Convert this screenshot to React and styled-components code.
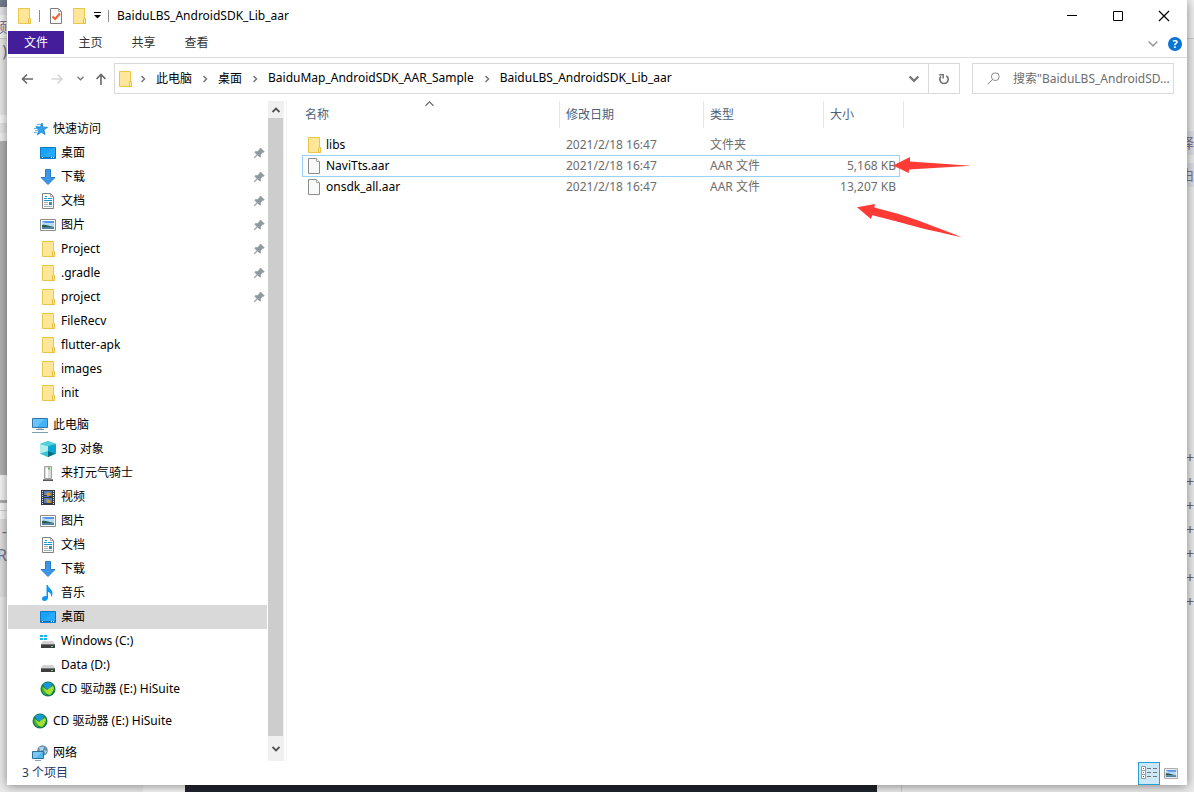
import React, { useState } from 'react';
import styled, { createGlobalStyle, css } from 'styled-components';

const GlobalStyle = createGlobalStyle`
  * { box-sizing: border-box; }
  body {
    margin: 0;
    background: #e9e9e9;
    font-family: "Noto Sans", "Noto Sans CJK SC", sans-serif;
    font-size: 12px;
    color: #000;
  }
  button, input {
    font: inherit;
    color: inherit;
    border: none;
    padding: 0;
    background: transparent;
  }
  svg { display: block; flex-shrink: 0; }
`;

/* ---------- icons ---------- */

const FolderIcon = () => (
  <svg width="16" height="16" viewBox="0 0 16 16">
    <path d="M2.5.5h11v10h1v5h-12z" fill="#ffe699" stroke="#e9c64c" />
    <path d="M12.5 15.5v-4.5l.8-.8 1.2.8v4.5z" fill="#fff0a8" stroke="#e8bf45" />
  </svg>
);

const FileIcon = () => (
  <svg width="16" height="16" viewBox="0 0 16 16">
    <path d="M2.5.5h8l3 3v12h-11z" fill="#f8f9f9" stroke="#8c8c8c" />
    <path d="M10.5.5v3h3" fill="#fff" stroke="#a8a8a8" />
  </svg>
);

const CheckDocIcon = () => (
  <svg width="16" height="16" viewBox="0 0 16 16">
    <path d="M2.5.5h8l3 3v12h-11z" fill="#fafafa" stroke="#7d7d7d" />
    <path d="M10.5.5v3h3" fill="none" stroke="#a8a8a8" />
    <path d="M4.5 8.5l2.5 2.5 5-5.5" fill="none" stroke="#f0622d" strokeWidth="2" />
  </svg>
);

const StarIcon = () => (
  <svg width="16" height="16" viewBox="0 0 16 16">
    <path d="M10 2l1.200 4.200 4.300.1-3.600 2.500 1.100 4.700-3.600-2.300-4 2.600 1.500-4.500L4.200 6.500l4.100-.2z" fill="#2fa4f0" stroke="#1b7cc0" strokeWidth=".8" />
    <path d="M5 3.500h4M3.500 5.500h4M2 7.500h3M3 9.500h3M2 11.500h3" stroke="#58b5ee" />
  </svg>
);

const DesktopIcon = () => (
  <svg width="16" height="16" viewBox="0 0 16 16">
    <path d="M.5 2.500h15v11H.500z" fill="#19a2fb" stroke="#0b7ac4" />
    <path d="M1 13L13 3h2v10z" fill="#3ab1ff" opacity=".45" />
    <path d="M1 12.500h14" stroke="#0c76bd" />
    <path d="M2 12.500h1M11 12.500h1M13 12.500h1" stroke="#fff" />
  </svg>
);

const DownloadIcon = () => (
  <svg width="16" height="16" viewBox="0 0 16 16">
    <path d="M5.500.500h5v8h4.500L8 15.500 1 8.500h4.500z" fill="#3c96e4" stroke="#2b7cc9" />
  </svg>
);

const DocumentIcon = () => (
  <svg width="16" height="16" viewBox="0 0 16 16">
    <path d="M2.500.500h8l3 3v12h-11z" fill="#fff" stroke="#818181" />
    <path d="M10.500.500v3h3" fill="none" stroke="#a0a0a0" />
    <path d="M4 5.500h3M5 3.500h2M8 5.500h4M4 7.500h8" stroke="#1d90d6" />
    <path d="M4 9.500h4M4 11.500h4M4 13.500h8" stroke="#a4adb2" />
    <path d="M9 9h3v3H9z" fill="#3a87b4" />
  </svg>
);

const PictureIcon = ({ width = 16, height = 12 }) => (
  <svg width={width} height={height} viewBox="0 2 16 12">
    <path d="M.5 2.500h15v11H.500z" fill="#fff" stroke="#8e8e8e" />
    <path d="M2 4h12v8H2z" fill="#b4dcf6" />
    <path d="M2 4h12v2H5z" fill="#5b94e8" />
    <path d="M2 8c3-1 6 1 12 2H2z" fill="#2f5b4c" />
    <path d="M2 10h12v2H2z" fill="#4e83a6" />
  </svg>
);

const ComputerIcon = () => (
  <svg width="16" height="16" viewBox="0 0 16 16">
    <path d="M.5 1.500h15v9H.500z" fill="#42b3fa" stroke="#3777a3" />
    <path d="M1 2h11L5 10H1z" fill="#77ccff" opacity=".7" />
    <path d="M6 12h4M4 12.500h8" stroke="#7a98ac" />
    <path d="M0 15.500h16" stroke="#7d9db5" />
  </svg>
);

const CubeIcon = () => (
  <svg width="16" height="16" viewBox="0 0 16 16">
    <path d="M0 3l8-3 8 3v9.500L8 16l-8-3.500z" fill="#2cc2d8" />
    <path d="M0 3l8 2v11l-8-3.500z" fill="#b4ecec" />
    <path d="M8 5l8-2v9.500L8 16z" fill="#0aa8d0" />
    <path d="M0 3l8-3 8 3-8 2z" fill="#55d0dd" />
    <path d="M8 10l7 2.800L8 16z" fill="#0a6d81" />
    <path d="M0 12.500L8 10v6z" fill="#38c5cf" />
  </svg>
);

const DeviceIcon = () => (
  <svg width="16" height="16" viewBox="0 0 16 16">
    <path d="M4.500 1.500h7v12h-7z" fill="#dcdcdc" stroke="#a0a0a0" />
    <path d="M7 3v10" stroke="#fff" strokeWidth="2" />
    <path d="M8 2.500h2v2H8z" fill="#64b846" />
    <path d="M3 14.500h10" stroke="#8a8a8a" />
    <path d="M3 15.500h10" stroke="#555" />
  </svg>
);

const VideoIcon = () => (
  <svg width="16" height="16" viewBox="0 0 16 16">
    <path d="M1 1h14v15H1z" fill="#393939" />
    <path d="M2.500 2v13M13.500 2v13" stroke="#e6e6e6" strokeDasharray="1 1" />
    <path d="M4 2h8v6H4zM4 9h8v6H4z" fill="#4b7bc9" />
    <path d="M5 5l3-2 3 2-1 2H6zM6 10l4 1 1 3H7z" fill="#d39b25" />
    <path d="M4 6.500h3M9 7.500h3M4 14.500h8" stroke="#273b60" />
  </svg>
);

const MusicIcon = () => (
  <svg width="16" height="16" viewBox="0 0 16 16">
    <path d="M6.500 0H8c.3 3.500 4.500 4 4.500 8 0 2-.5 3.200-1.500 4 .3-3-.8-4.500-3-5v5.500C8 14.600 6.500 16 4.500 16S2 15 2 13.500 3.800 10.700 6.500 11z" fill="#0d97f5" />
  </svg>
);

const DriveIcon = ({ system }) => (
  <svg width="16" height="16" viewBox="0 0 16 16">
    <path d="M3 8h10l2 3H1z" fill="#d0d2d4" />
    <path d="M1 11h14v4H1z" fill="#3b3d3f" />
    <path d="M1 11.500h14" stroke="#777" />
    <path d="M11 13h2v1h-2z" fill="#63de5c" />
    {system && <path d="M0 2h3v2H0zM4 2h3v2H4zM0 5h3v2H0zM4 5h3v2H4z" fill="#18b4ea" />}
  </svg>
);

const SuiteIcon = () => (
  <svg width="16" height="16" viewBox="0 0 16 16">
    <circle cx="8" cy="8" r="7.500" fill="#107d55" />
    <path d="M3 3c3-2 7-2 9 0L9 9 5 7z" fill="#1a9ad5" />
    <path d="M2 5l5 6-1 3C3 13 1 9 2 5z" fill="#3eae37" />
    <path d="M3 6l4 3 6-4.500 1 3c-1 3-2 5-4 6.500l-3-1-3-4z" fill="#a3e02b" />
  </svg>
);

const NetworkIcon = () => (
  <svg width="16" height="16" viewBox="0 0 16 16">
    <circle cx="10.500" cy="5.500" r="5.300" fill="#6392b0" />
    <path d="M7 2c2 1 3-1 5 0l-1 3-3 1zM12 5l3 1-2 3z" fill="#b4d2e0" />
    <path d="M.5 6.500h11v7H.500z" fill="#55b5ed" stroke="#2e739e" />
    <path d="M1 7h9l-6 6H1z" fill="#8ad2f8" opacity=".7" />
    <path d="M3 15.500h6" stroke="#8aa5b8" />
  </svg>
);

const PinIcon = () => (
  <svg width="12" height="12" viewBox="0 0 12 12">
    <path d="M7.500 1l3.800 3.800-1 .6-.7-.1-2 2.200.2 2-.9.800-2.300-2.300L1.400 11 1 10.700l2.900-3.200L1.700 5.300l.8-.9 2 .2 2.200-2L6.700 1.600z" fill="#8d989f" stroke="#8d989f" strokeWidth=".6" />
  </svg>
);

const Chevron = ({ dir = 'down', size = 8, color = '#666', weight = 1.5 }) => {
  const paths = {
    down: 'M.5 2l3.500 3.500L7.500 2',
    up: 'M.5 6L4 2.500 7.500 6',
    right: 'M2.500 1l3 3-3 3',
  };
  return (
    <svg width={size} height={size} viewBox="0 0 8 8">
      <path d={paths[dir]} fill="none" stroke={color} strokeWidth={weight} />
    </svg>
  );
};

const Arrow = ({ dir, color }) => {
  const paths = {
    left: 'M6 1.500L1.500 6 6 10.500M1.500 6H12',
    right: 'M6.500 1.500L11 6l-4.500 4.500M11 6H.500',
    up: 'M1.500 6L6 1.500 10.500 6M6 1.500V12',
  };
  return (
    <svg width="12" height="12" viewBox="0 0 12 12">
      <path d={paths[dir]} fill="none" stroke={color} strokeWidth="1.600" />
    </svg>
  );
};

const RefreshIcon = () => (
  <svg width="12" height="12" viewBox="0 0 12 12">
    <path d="M8.200 2.700A4.200 4.200 0 1 1 3 3.400" fill="none" stroke="#777" strokeWidth="1.700" />
    <path d="M1.200 1.700h4v3.800" fill="none" stroke="#777" strokeWidth="1.500" />
  </svg>
);

/* ---------- data ---------- */

const groups = [
  [
    { label: '快速访问', icon: StarIcon, root: true },
    { label: '桌面', icon: DesktopIcon, pinned: true },
    { label: '下载', icon: DownloadIcon, pinned: true },
    { label: '文档', icon: DocumentIcon, pinned: true },
    { label: '图片', icon: PictureIcon, pinned: true },
    { label: 'Project', icon: FolderIcon, pinned: true },
    { label: '.gradle', icon: FolderIcon, pinned: true },
    { label: 'project', icon: FolderIcon, pinned: true },
    { label: 'FileRecv', icon: FolderIcon },
    { label: 'flutter-apk', icon: FolderIcon },
    { label: 'images', icon: FolderIcon },
    { label: 'init', icon: FolderIcon },
  ],
  [
    { label: '此电脑', icon: ComputerIcon, root: true },
    { label: '3D 对象', icon: CubeIcon },
    { label: '来打元气骑士', icon: DeviceIcon },
    { label: '视频', icon: VideoIcon },
    { label: '图片', icon: PictureIcon },
    { label: '文档', icon: DocumentIcon },
    { label: '下载', icon: DownloadIcon },
    { label: '音乐', icon: MusicIcon },
    { label: '桌面', icon: DesktopIcon, selected: true },
    { label: 'Windows (C:)', icon: () => <DriveIcon system /> },
    { label: 'Data (D:)', icon: DriveIcon },
    { label: 'CD 驱动器 (E:) HiSuite', icon: SuiteIcon },
  ],
  [{ label: 'CD 驱动器 (E:) HiSuite', icon: SuiteIcon, root: true }],
  [{ label: '网络', icon: NetworkIcon, root: true }],
];

const crumbs = ['此电脑', '桌面', 'BaiduMap_AndroidSDK_AAR_Sample', 'BaiduLBS_AndroidSDK_Lib_aar'];

const files = [
  { name: 'libs', date: '2021/2/18 16:47', type: '文件夹', size: '', icon: FolderIcon },
  { name: 'NaviTts.aar', date: '2021/2/18 16:47', type: 'AAR 文件', size: '5,168 KB', icon: FileIcon, focused: true },
  { name: 'onsdk_all.aar', date: '2021/2/18 16:47', type: 'AAR 文件', size: '13,207 KB', icon: FileIcon },
];

// what shows of the windows underneath, top to bottom
const leftBands = [
  { h: 7, bg: '#737a8c' },
  { h: 8, bg: '#e4e4ea' },
  { h: 23, bg: '#f4f4f4', text: '频' },
  { h: 26, bg: '#e8e8e8', text: ')', line: true, big: true },
  { h: 51, bg: '#e8e8e8' },
  { h: 8, bg: '#f8f8f8' },
  { h: 10, bg: '#e6e6e6' },
  { h: 8, bg: '#f2f2f2' },
  { h: 334, bg: '#b3b3b3' },
  { h: 25, bg: '#f6f6f6' },
  { h: 3, bg: '#b0b0b0' },
  { h: 7, bg: '#f6f6f6' },
  { h: 9, bg: '#f6f6f6', line: true },
  { h: 24, bg: '#e0e0e0', text: '-', big: true },
  { h: 54, bg: '#e0e0e0', text: 'R', big: true },
];

const rightBands = [
  { h: 38, bg: '#f0f0f0' },
  { h: 93, bg: '#ebebeb', line: true },
  { h: 24, bg: '#dbdfe6', text: '译' },
  { h: 8, bg: '#ebebeb' },
  { h: 24, bg: '#dbdfe6', text: '由' },
  { h: 259, bg: '#ebebeb' },
  ...Array.from({ length: 7 }, () => ({ h: 24, bg: '#ebebeb', text: '+' })),
];

/* ---------- app ---------- */

function App() {
  const [query, setQuery] = useState('');

  return (
    <Desktop>
      <GlobalStyle />
      <Edge>
        {leftBands.map((b, i) => (
          <Band key={i} $h={b.h} $bg={b.bg} $line={b.line} $big={b.big}>{b.text}</Band>
        ))}
      </Edge>
      <Window>
        <TitleBar>
          <QuickAccess>
            <FolderIcon />
            <Divider />
            <IconButton aria-label="属性"><CheckDocIcon /></IconButton>
            <IconButton aria-label="新建文件夹"><FolderIcon /></IconButton>
            <IconButton aria-label="自定义快速访问工具栏">
              <svg width="7" height="7" viewBox="0 0 7 7">
                <path d="M0 3h7L3.500 6.500z" fill="#000" />
                <path d="M0 .5h7" stroke="#000" />
              </svg>
            </IconButton>
            <Divider />
          </QuickAccess>
          <Title>BaiduLBS_AndroidSDK_Lib_aar</Title>
          <CaptionButton aria-label="最小化">
            <svg width="12" height="12" viewBox="0 0 12 12"><path d="M1 5.500h10" stroke="#000" /></svg>
          </CaptionButton>
          <CaptionButton aria-label="最大化">
            <svg width="12" height="12" viewBox="0 0 12 12"><path d="M1.500 1.500h9v9h-9z" fill="none" stroke="#000" /></svg>
          </CaptionButton>
          <CaptionButton aria-label="关闭">
            <svg width="12" height="12" viewBox="0 0 12 12"><path d="M1 1l10 10M11 1L1 11" stroke="#000" strokeWidth="1.200" /></svg>
          </CaptionButton>
        </TitleBar>

        <Ribbon>
          <FileTab>文件</FileTab>
          <Tab>主页</Tab>
          <Tab>共享</Tab>
          <Tab>查看</Tab>
          <RibbonTools>
            <IconButton aria-label="展开功能区"><Chevron color="#9a9a9a" size={10} weight={1.2} /></IconButton>
            <HelpButton aria-label="帮助">?</HelpButton>
          </RibbonTools>
        </Ribbon>

        <AddressRow>
          <NavButton $w={30} aria-label="后退"><Arrow dir="left" color="#686868" /></NavButton>
          <NavButton $w={30} aria-label="前进"><Arrow dir="right" color="#d6d6d6" /></NavButton>
          <NavButton $w={16} aria-label="最近浏览的位置"><Chevron size={7} color="#777" /></NavButton>
          <NavButton $w={26} aria-label="向上"><Arrow dir="up" color="#686868" /></NavButton>
          <AddressBar>
            <FolderIcon />
            {crumbs.map((c) => (
              <React.Fragment key={c}>
                <Chevron dir="right" color="#777" />
                <Crumb href="#">{c}</Crumb>
              </React.Fragment>
            ))}
            <HistoryButton aria-label="以前的位置"><Chevron size={10} color="#777" weight={1.8} /></HistoryButton>
            <RefreshButton aria-label="刷新"><RefreshIcon /></RefreshButton>
          </AddressBar>
          <SearchBox>
            <svg width="13" height="13" viewBox="0 0 13 13">
              <circle cx="8.300" cy="4.700" r="3.900" fill="none" stroke="#888" />
              <path d="M5.500 7.500L.5 12.500" stroke="#888" />
            </svg>
            <input
              type="text"
              aria-label="搜索"
              placeholder={'搜索"BaiduLBS_AndroidSD...'}
              value={query}
              onChange={(e) => setQuery(e.target.value)}
            />
          </SearchBox>
        </AddressRow>

        <Main>
          <Sidebar>
            {groups.map((items, g) => (
              <Group key={g}>
                {items.map(({ label, icon: Icon, root, pinned, selected }) => (
                  <NavItem key={label} href="#" $root={root} $selected={selected}>
                    <Icon />
                    <span>{label}</span>
                    {pinned && <PinIcon />}
                  </NavItem>
                ))}
              </Group>
            ))}
          </Sidebar>
          <ScrollBar>
            <ScrollButton $h={17} aria-label="向上滚动"><Chevron dir="up" color="#505050" weight={1.8} /></ScrollButton>
            <Thumb />
            <ScrollButton $h={25} aria-label="向下滚动"><Chevron color="#505050" weight={1.8} /></ScrollButton>
          </ScrollBar>
          <Content>
            <FileTable>
              <colgroup>
                <Col $w={258} /><Col $w={144} /><Col $w={120} /><Col $w={80} />
              </colgroup>
              <thead>
                <tr>
                  <HeadCell>
                    名称
                    <SortMark><Chevron dir="up" color="#666" weight={1} size={9} /></SortMark>
                  </HeadCell>
                  <HeadCell>修改日期</HeadCell>
                  <HeadCell>类型</HeadCell>
                  <HeadCell>大小</HeadCell>
                </tr>
              </thead>
              <tbody>
                {files.map(({ icon: Icon, ...f }) => (
                  <FileRow key={f.name} $focused={f.focused}>
                    <td><FileName><Icon />{f.name}</FileName></td>
                    <td>{f.date}</td>
                    <td>{f.type}</td>
                    <SizeCell>{f.size}</SizeCell>
                  </FileRow>
                ))}
              </tbody>
            </FileTable>
            <Marks width="120" height="90" viewBox="855 151 120 90">
              <path d="M893 165.500L910 157v4.500l61 4.300-62 3.700-.3 3.500z" fill="#ff3b36" />
              <path d="M857 207.300l18-3.300-.7 3.600L895 213c15 4 35 12 67 24.200-33-7-52-12-66-16l-23.600-6-1.500 3.800z" fill="#ff3b36" />
            </Marks>
          </Content>
        </Main>

        <StatusBar>
          <span>3 个项目</span>
          <ViewButton $active aria-label="详细信息">
            <svg width="18" height="16" viewBox="0 0 18 16">
              <path d="M1.500 1.500h4v4h-4zM1.500 5.500h4v4h-4zM1.500 9.500h4v4h-4z" fill="#fff" stroke="#999" />
              <path d="M3 3h1v1H3z" fill="#4a7a58" />
              <path d="M3 7h1v1H3z" fill="#2a90e8" />
              <path d="M3 11h1v1H3z" fill="#d01818" />
              <path d="M7 3.500h4M13 3.500h4M7 7.500h4M13 7.500h4M7 11.500h4M13 11.500h4" stroke="#777" />
            </svg>
          </ViewButton>
          <ViewButton aria-label="大缩略图"><PictureIcon width={14} height={11} /></ViewButton>
        </StatusBar>
      </Window>
      <Edge>
        {rightBands.map((b, i) => (
          <Band key={i} $h={b.h} $bg={b.bg} $line={b.line} $plus={b.text === '+'}>{b.text}</Band>
        ))}
      </Edge>
      <BottomEdge />
    </Desktop>
  );
}

const Desktop = styled.div`
  display: grid;
  grid-template-columns: 7px minmax(0, 1fr) 7px;
  grid-template-rows: minmax(0, 1fr) 7px;
  height: 100vh;
  overflow: hidden;
`;

const Edge = styled.div`
  display: flex;
  flex-direction: column;
  overflow: hidden;
  background: #ebebeb;
`;

const Band = styled.div`
  display: flex;
  flex: 0 0 ${(p) => p.$h}px;
  overflow: hidden;
  justify-content: flex-end;
  background: ${(p) => p.$bg};
  color: ${(p) => (p.$plus ? '#666' : '#7a7595')};
  font-size: ${(p) => (p.$big ? 16 : 14)}px;
  line-height: 24px;
  ${(p) => p.$line && 'border-top: 1px solid #cfcfcf;'}
`;

const BottomEdge = styled.div`
  grid-column: 1 / -1;
  display: flex;
  background: linear-gradient(90deg, #ebebeb 143px, #f4f4f4 143px 185px, #20242c 185px 877px, #ebebeb 877px 901px, #cfcfcf 901px 902px, #ebebeb 902px);
`;

const Window = styled.div`
  position: relative;
  display: flex;
  flex-direction: column;
  min-width: 0;
  min-height: 0;
  padding-left: 1px;
  background: #fff;
  box-shadow: 0 1px 10px rgba(0, 0, 0, 0.45);
`;

const TitleBar = styled.header`
  display: flex;
  align-items: center;
  height: 31px;
  flex-shrink: 0;
`;

const QuickAccess = styled.div`
  display: flex;
  align-items: center;
  gap: 7px;
  padding: 0 7px 0 8px;
`;

const Divider = styled.i`
  width: 1px;
  height: 12px;
  margin-right: 1px;
  background: #8c8c8c;
`;

const IconButton = styled.button`
  display: flex;
  align-items: center;
  justify-content: center;
`;

const Title = styled.div`
  flex: 1;
  min-width: 0;
  white-space: nowrap;
`;

const CaptionButton = styled.button`
  display: flex;
  align-items: center;
  justify-content: center;
  width: 46px;
  height: 31px;
`;

const Ribbon = styled.nav`
  display: flex;
  height: 27px;
  flex-shrink: 0;
  border-bottom: 1px solid #dadbdc;
`;

const Tab = styled.button`
  width: 53px;
  height: 24px;
  color: #333;
  line-height: 24px;
`;

const FileTab = styled(Tab)`
  width: 56px;
  height: 23px;
  background: #441d9b;
  color: #fff;
`;

const RibbonTools = styled.div`
  display: flex;
  align-items: center;
  gap: 10px;
  margin-left: auto;
  padding-right: 5px;
`;

const HelpButton = styled.button`
  width: 14px;
  height: 14px;
  border-radius: 50%;
  background: #0a74d4;
  color: #fff;
  font-size: 11px;
  font-weight: 700;
  line-height: 14px;
`;

const AddressRow = styled.div`
  display: flex;
  align-items: center;
  flex-shrink: 0;
  padding: 5px 13px 6px 4px;
`;

const NavButton = styled(IconButton)`
  width: ${(p) => p.$w}px;
`;

const AddressBar = styled.div`
  display: flex;
  align-items: center;
  flex: 1;
  gap: 9px;
  min-width: 0;
  height: 31px;
  padding-left: 2px;
  border: 1px solid #d9d9d9;

  > svg:first-child {
    margin-right: -3px;
  }
`;

const Crumb = styled.a`
  padding-bottom: 2px;
  color: #000;
  text-decoration: none;
  white-space: nowrap;
`;

const HistoryButton = styled(IconButton)`
  width: 28px;
  height: 29px;
  margin-left: auto;
`;

const RefreshButton = styled(IconButton)`
  width: 31px;
  height: 29px;
  margin-left: -9px;
  border-left: 1px solid #d9d9d9;
`;

const SearchBox = styled.label`
  display: flex;
  align-items: center;
  gap: 13px;
  width: 202px;
  height: 31px;
  margin-left: 12px;
  padding-left: 14px;
  border: 1px solid #d9d9d9;

  input {
    flex: 1;
    min-width: 0;
    outline: none;
  }
  input::placeholder {
    color: #6d6d6d;
    opacity: 1;
  }
`;

const Main = styled.div`
  display: flex;
  flex: 1;
  min-height: 0;
  padding-top: 1px;
`;

const Sidebar = styled.nav`
  width: 259px;
  flex-shrink: 0;
  padding-top: 16px;
  overflow: hidden;
`;

const Group = styled.div`
  margin-bottom: 8px;
`;

const NavItem = styled.a`
  display: flex;
  align-items: center;
  gap: 5px;
  height: 24px;
  padding: 0 2px 0 ${(p) => (p.$root ? 24 : 32)}px;
  color: #000;
  text-decoration: none;
  white-space: nowrap;
  background: ${(p) => (p.$selected ? '#d9d9d9' : 'transparent')};

  span {
    flex: 1;
    padding-bottom: 2px;
  }
`;

const ScrollBar = styled.div`
  display: flex;
  flex-direction: column;
  width: 16px;
  margin-left: 1px;
  flex-shrink: 0;
  background: #f0f0f0;
`;

const ScrollButton = styled(IconButton)`
  height: ${(p) => p.$h}px;
`;

const Thumb = styled.div`
  flex: 1;
  margin-right: 1px;
  background: #cdcdcd;
`;

const Content = styled.main`
  position: relative;
  flex: 1;
  min-width: 0;
  margin-left: 2px;
  padding-left: 15px;
  border-left: 1px solid #f3f3f3;
`;

const Col = styled.col`
  width: ${(p) => p.$w}px;
`;

const FileTable = styled.table`
  width: 602px;
  table-layout: fixed;
  border-collapse: separate;
  border-spacing: 0;

  thead::after {
    content: '';
    display: block;
    height: 6px;
  }
`;

const HeadCell = styled.th`
  position: relative;
  height: 27px;
  padding: 0 0 2px 6px;
  border-right: 1px solid #e5e5e5;
  color: #4c607a;
  font-weight: 400;
  text-align: left;

  &:first-child { padding-left: 3px; }
`;

const SortMark = styled.span`
  position: absolute;
  top: -2px;
  left: 123px;
`;

const FileRow = styled.tr`
  position: relative;
  color: #6d6d6d;

  td {
    height: 21px;
    padding: 0 0 0 6px;
    white-space: nowrap;
    line-height: 20px;
  }
  td:first-child {
    padding-left: 4px;
    color: #000;
  }
  ${(p) => p.$focused && css`
    &::after {
      content: '';
      position: absolute;
      inset: 0 4px -1px 0;
      border: 1px solid #99d1ff;
    }
  `}
`;

const FileName = styled.div`
  display: flex;
  align-items: center;
  gap: 4px;
`;

const SizeCell = styled.td`
  && {
    padding-right: 8px;
    text-align: right;
  }
`;

const Marks = styled.svg`
  position: absolute;
  top: 50px;
  left: 568px;
`;

const StatusBar = styled.footer`
  display: flex;
  align-items: center;
  height: 24px;
  flex-shrink: 0;
  padding: 0 5px 0 14px;
  color: #1f3a66;

  span {
    flex: 1;
    padding-bottom: 2px;
  }
`;

const ViewButton = styled(IconButton)`
  width: 22px;
  height: 23px;
  border: 1px solid ${(p) => (p.$active ? '#2a9fd6' : 'transparent')};
  background: ${(p) => (p.$active ? '#cce8f6' : 'transparent')};
`;

export default App;
